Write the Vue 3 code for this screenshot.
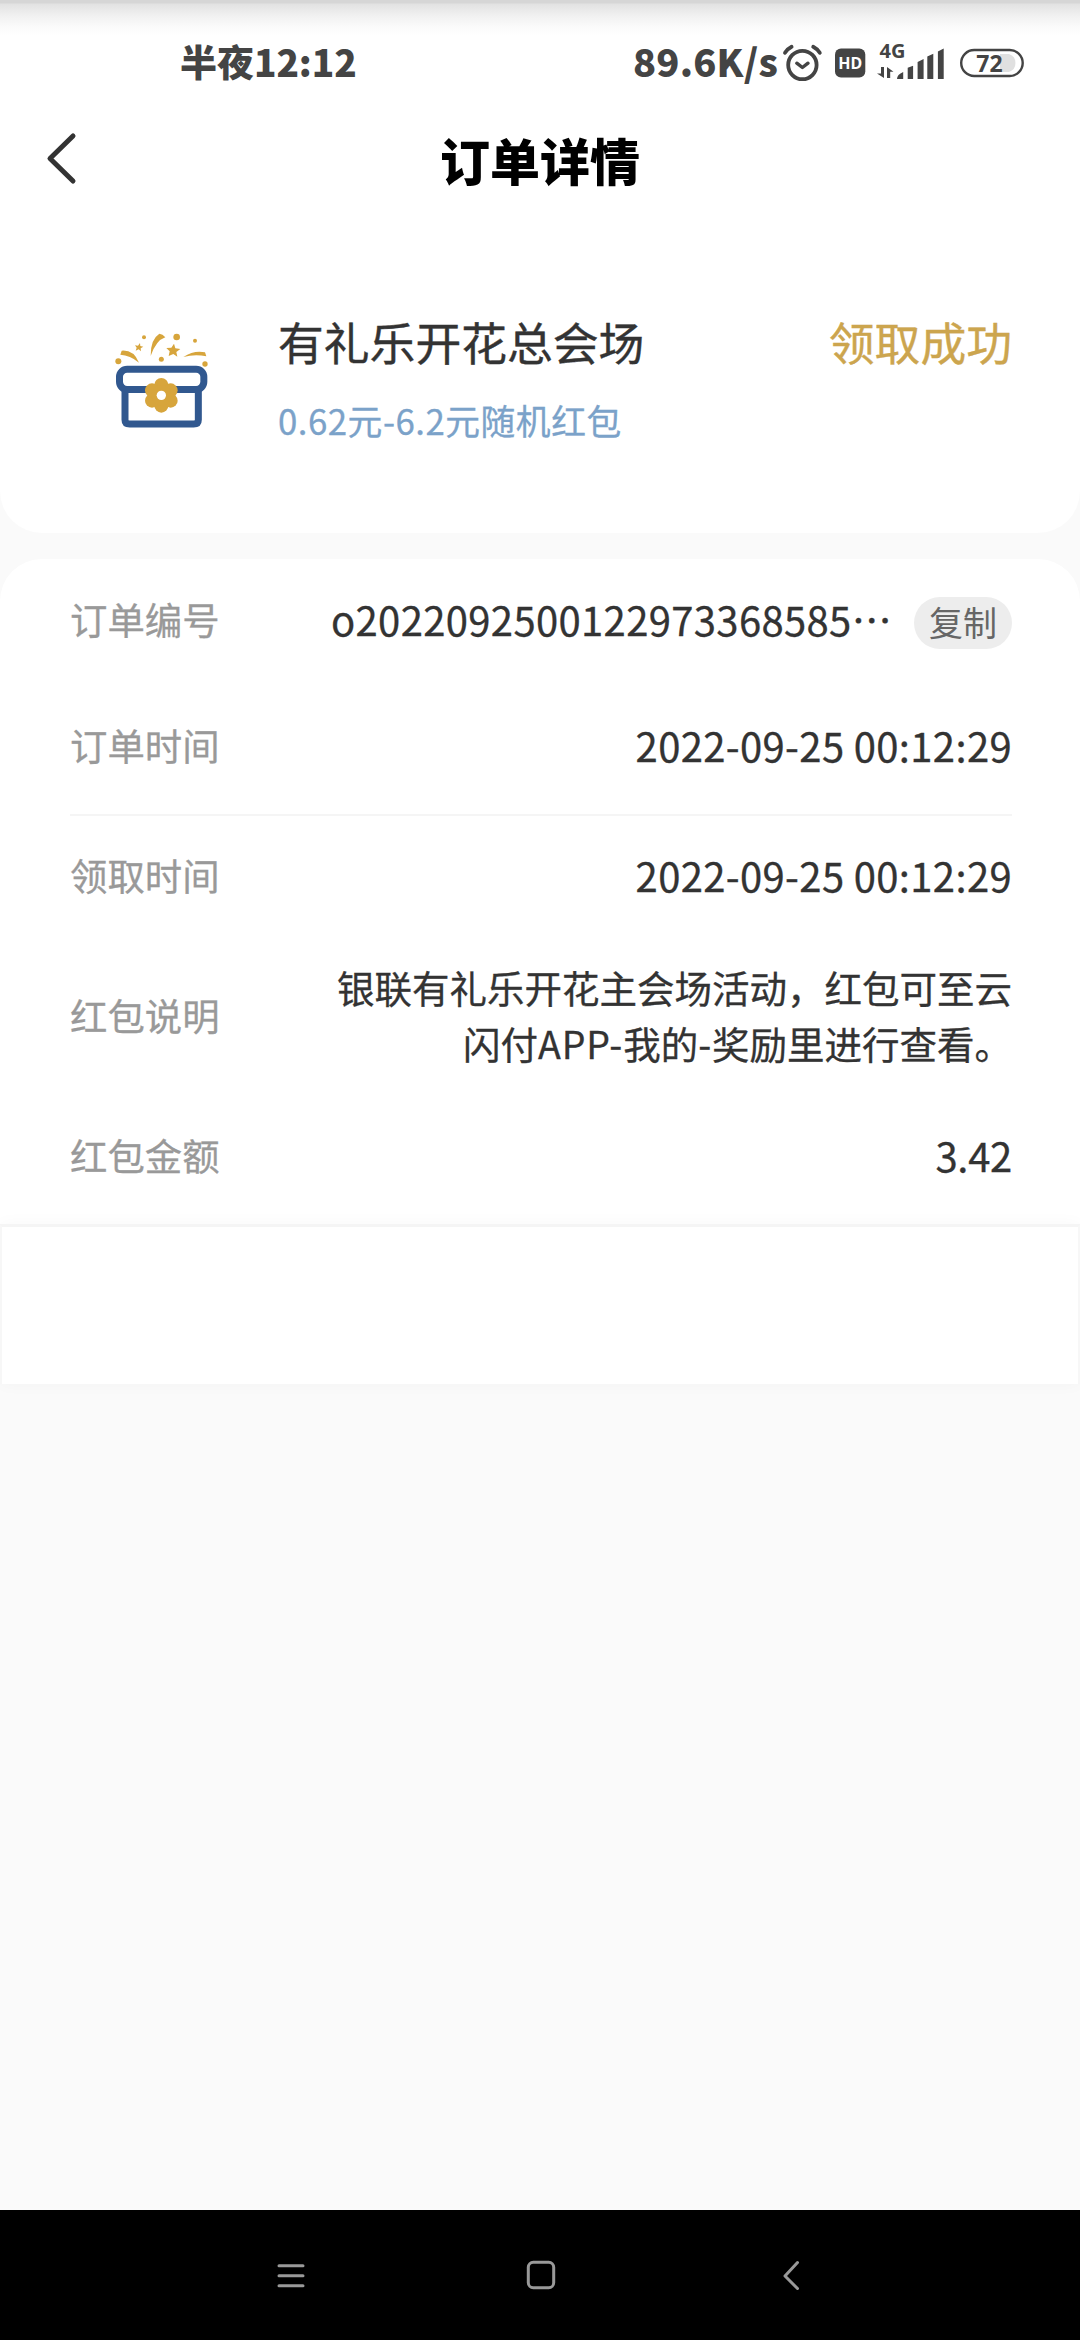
<script setup>
const timeRows = {
  ordered: '2022-09-25 00:12:29',
  claimed: '2022-09-25 00:12:29',
}
</script>

<template>
  <div class="screen" lang="zh-CN">
    <div class="summary">
      <div class="status">
        <span class="clock">半夜<span class="clock-digits">12:12</span></span>
        <span class="speed">89.6K/s</span>
        <svg class="status-icons" width="248" height="64" viewBox="780 29 248 64">
          <g fill="none" stroke="#444" stroke-linecap="round" stroke-linejoin="round">
            <circle cx="802.4" cy="64" r="14.2" stroke-width="3.8" />
            <path d="M796.8 62.2l5.6 4.3 5.6-4.3" stroke-width="3.4" />
            <path d="M785 51.8q2.6-4 6.6-6M819.8 51.8q-2.6-4-6.6-6" stroke-width="3.8" />
          </g>
          <rect x="835" y="47.5" width="30.3" height="29" rx="6" fill="#444" />
          <text x="850.2" y="67.6" text-anchor="middle" class="hd">HD</text>
          <text x="879.5" y="57" class="net">4G</text>
          <g fill="#444">
            <path d="M881 66h3v11l-7-4.5h4zM887 77V66l6.5 4.8h-3.3V77z" />
            <path d="M897 78q0-4.5 6.2-7v7zM907.7 78V66.8l5.4-2V78zM917.6 78V61l6-3V78zM927.3 78V55.5l6-2.8V78zM937.9 78V50.5l5.8-3V78z" />
          </g>
          <rect x="961.2" y="49" width="61.5" height="26" rx="13" fill="#fff" stroke="#444" stroke-width="2.4" />
          <path d="M1000 53h9a9.500 9.500 0 0 1 0 18h-9z" fill="#e0e0e0" />
          <text x="989.5" y="70.8" text-anchor="middle" class="battery">72</text>
        </svg>
      </div>

      <header class="navbar">
        <svg class="back" width="34" height="56" viewBox="0 0 34 56">
          <path d="M28 6L5 28.5 28 51" fill="none" stroke="#333" stroke-width="5" stroke-linecap="round" stroke-linejoin="round" />
        </svg>
        <h1>订单详情</h1>
      </header>

      <section class="prize">
        <svg class="gift" width="140" height="140" viewBox="0 0 420 420">
          <g fill="none" stroke="#31588f" stroke-width="21">
            <rect x="88.500" y="177.500" width="253" height="61" rx="23" />
            <path d="M105 240v89q0 13 14 13h192q14 0 14-13v-89" />
          </g>
          <g fill="#d7a53c">
            <circle cx="214" cy="225" r="21" />
            <circle cx="242" cy="241" r="21" />
            <circle cx="242" cy="272" r="21" />
            <circle cx="214" cy="287" r="21" />
            <circle cx="186" cy="272" r="21" />
            <circle cx="186" cy="241" r="21" />
            <circle cx="214" cy="256" r="30" />
            <circle cx="85" cy="154" r="9" />
            <circle cx="162" cy="82" r="6" />
            <circle cx="260" cy="81" r="10" />
            <circle cx="315" cy="92" r="6" />
            <circle cx="214" cy="148" r="7.500" />
            <circle cx="345" cy="162" r="8" />
            <path d="M95 122Q131 119 147 158 120 135 91 134zM182 138Q181 88 208 71 218 72 226 82 198 91 182 138zM280 141Q312 120 345 127L349 139Q314 132 280 141z" />
            <path d="M150 99l1 9 9 2-8 5 1 9-7-6-9 4 3-9-5-7 9 1zM252 101l4 14 15 2-12 9 3 14-12-8-14 6 3-14-10-10 15-1z" />
          </g>
          <circle cx="214" cy="256" r="14" fill="#fff" />
        </svg>
        <div class="prize-text">
          <div class="prize-name">有礼乐开花总会场</div>
          <div class="prize-range">0.62元-6.2元随机红包</div>
        </div>
        <div class="prize-state">领取成功</div>
      </section>
    </div>

    <main class="details">
      <div class="row order">
        <span class="label">订单编号</span>
        <span class="value id">o2022092500122973368585…</span>
        <button class="copy">复制</button>
      </div>
      <div class="row ordered">
        <span class="label">订单时间</span>
        <span class="value">{{ timeRows.ordered }}</span>
      </div>
      <div class="row claimed">
        <span class="label">领取时间</span>
        <span class="value">{{ timeRows.claimed }}</span>
      </div>
      <div class="row note">
        <span class="label">红包说明</span>
        <p>银联有礼乐开花主会场活动，红包可至云<br />闪付<span class="latin">APP-</span>我的<span class="latin">-</span>奖励里进行查看。</p>
      </div>
      <div class="row amount">
        <span class="label">红包金额</span>
        <span class="value sum">3.42</span>
      </div>
    </main>
    <div class="panel"></div>

    <nav class="system">
      <svg width="32" height="32" viewBox="0 0 32 32"><path d="M4 6.700h24M4 16.700h24M4 26.700h24" /></svg>
      <svg width="32" height="32" viewBox="0 0 32 32"><rect x="3.300" y="3.300" width="25.400" height="25.400" rx="5" /></svg>
      <svg width="32" height="32" viewBox="0 0 32 32"><path d="M22.500 3.500L10 17l12.500 12.500" /></svg>
    </nav>
  </div>
</template>

<style>
body {
  margin: 0;
  background: #fafafa;
}
</style>

<style scoped>
.screen {
  display: flex;
  flex-direction: column;
  width: 1080px;
  height: 2340px;
  overflow: hidden;
  background: #fafafa;
  color: #333;
  font-family: "Noto Sans CJK SC", "Noto Sans", sans-serif;
}
.summary {
  box-sizing: border-box;
  height: 533px;
  border-radius: 0 0 42px 42px;
  background: linear-gradient(#d6d6d6 0, #d6d6d6 3px, #e2e2e2 4px, #f1f1f1 16px, #fafafa 26px, #fff 36px);
}
.status {
  display: flex;
  align-items: center;
  height: 124px;
  box-sizing: border-box;
  padding-left: 180px;
  color: #444;
  font-weight: 900;
  font-size: 37px;
}
.clock {
  width: 453px;
  padding-bottom: 3px;
  white-space: nowrap;
}
.clock-digits {
  letter-spacing: -0.1px;
}
.speed {
  width: 147px;
  padding-bottom: 3px;
  white-space: nowrap;
  font-weight: 900;
  font-size: 38px;
  letter-spacing: 0.2px;
}
.status-icons {
  flex: none;
}
.hd,
.net,
.battery {
  font-family: "Noto Sans", sans-serif;
  font-weight: 700;
}
.hd {
  font-size: 16px;
  fill: #fff;
}
.net {
  font-size: 20px;
  fill: #444;
}
.battery {
  font-size: 23px;
  fill: #444;
}
.navbar {
  display: grid;
  grid-template-columns: 80px 1fr 80px;
  align-items: center;
  height: 72px;
}
.back {
  margin: -4px 0 0 45px;
}
h1 {
  margin: -3px 0 0;
  text-align: center;
  color: #000;
  font-size: 50px;
  line-height: 72px;
  font-weight: 900;
}
.prize {
  display: flex;
  padding: 114px 68px 0 90px;
}
.gift {
  flex: none;
}
.prize-text {
  margin-left: 48px;
}
.prize-name,
.prize-state {
  height: 68px;
  margin-top: -3px;
  line-height: 68px;
  font-size: 45.800px;
  white-space: nowrap;
  -webkit-text-stroke: 0.4px currentColor;
}
.prize-range {
  height: 50px;
  margin-top: 20px;
  line-height: 50px;
  color: #7ba2c9;
  font-size: 34.800px;
  letter-spacing: 0.5px;
  -webkit-text-stroke: 0.3px currentColor;
}
.prize-state {
  margin-left: auto;
  color: #cca54e;
}
.details {
  display: flex;
  flex-direction: column;
  box-sizing: border-box;
  height: 665px;
  margin-top: 26px;
  padding: 0 68px 0 70px;
  border-radius: 42px 42px 0 0;
  background: #fff;
}
.row {
  display: flex;
  align-items: center;
  flex: none;
  box-sizing: border-box;
}
.label {
  color: #999;
  font-size: 37.400px;
  white-space: nowrap;
  -webkit-text-stroke: 0.3px currentColor;
}
.value {
  margin-left: auto;
  font-size: 40px;
  letter-spacing: 0.35px;
  white-space: nowrap;
  -webkit-text-stroke: 0.3px currentColor;
}
.sum {
  letter-spacing: -0.3px;
}
.order {
  height: 124px;
  padding-bottom: 4px;
}
.copy {
  width: 98px;
  height: 52px;
  margin: 8px 0 0 22px;
  padding: 0 0 3px;
  border: 0;
  border-radius: 26px;
  background: #ededed;
  color: #666;
  font: 34px/49px "Noto Sans CJK SC", sans-serif;
}
.ordered {
  height: 133px;
  padding-bottom: 7px;
  border-bottom: 2px solid #f5f5f5;
}
.claimed {
  height: 122px;
  padding-bottom: 5px;
}
.note {
  height: 158px;
  padding-bottom: 4px;
  justify-content: space-between;
}
.note p {
  margin: 0;
  text-align: right;
  font-size: 37.500px;
  line-height: 56px;
  -webkit-text-stroke: 0.3px currentColor;
}
.latin {
  letter-spacing: 0.8px;
}
.amount {
  height: 122px;
  padding-bottom: 4px;
}
.panel {
  box-sizing: border-box;
  height: 160px;
  border: 2px solid #f7f7f7;
  border-top: 3px solid #f5f5f5;
  border-bottom: 0;
  background: #fff;
  box-shadow: 0 0 16px rgba(0, 0, 0, 0.03);
}
.system {
  display: flex;
  justify-content: center;
  align-items: center;
  gap: 218px;
  height: 130px;
  margin-top: auto;
  padding: 0 0 1px 2px;
  box-sizing: border-box;
  background: #000;
}
.system svg {
  fill: none;
  stroke: #999;
  stroke-width: 3;
  stroke-linecap: round;
  stroke-linejoin: round;
}
</style>
